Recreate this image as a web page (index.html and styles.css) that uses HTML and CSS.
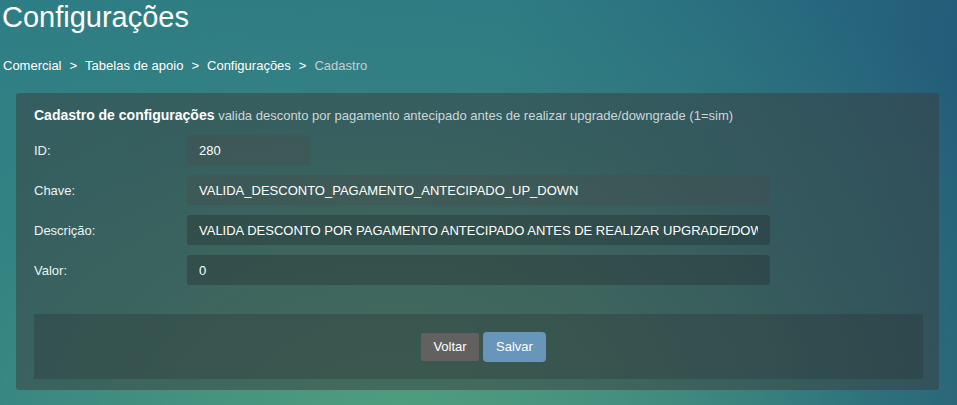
FILE: index.html
```html
<!DOCTYPE html>
<html lang="pt-BR">
<head>
<meta charset="utf-8">
<title>Configurações</title>
<link rel="stylesheet" href="styles.css">
</head>
<body>
<div class="page">
  <h1 class="title">Configurações</h1>
  <nav class="breadcrumb">
    <a class="crumb" href="#">Comercial</a><span class="sep">&gt;</span><a class="crumb" href="#">Tabelas de apoio</a><span class="sep">&gt;</span><a class="crumb" href="#">Configurações</a><span class="sep">&gt;</span><span class="crumb current">Cadastro</span>
  </nav>
  <section class="card">
    <div class="card-head"><strong class="card-title">Cadastro de configurações</strong> <span class="card-sub">valida desconto por pagamento antecipado antes de realizar upgrade/downgrade (1=sim)</span></div>
    <form class="form">
      <div class="row">
        <label class="label" for="f-id">ID:</label>
        <input class="input input-short input-ro" id="f-id" type="text" value="280" readonly>
      </div>
      <div class="row">
        <label class="label" for="f-chave">Chave:</label>
        <input class="input input-ro" id="f-chave" type="text" value="VALIDA_DESCONTO_PAGAMENTO_ANTECIPADO_UP_DOWN" readonly>
      </div>
      <div class="row">
        <label class="label" for="f-desc">Descrição:</label>
        <input class="input" id="f-desc" type="text" value="VALIDA DESCONTO POR PAGAMENTO ANTECIPADO ANTES DE REALIZAR UPGRADE/DOWNGRADE">
      </div>
      <div class="row">
        <label class="label" for="f-valor">Valor:</label>
        <input class="input" id="f-valor" type="text" value="0">
      </div>
      <div class="actions">
        <button class="btn btn-back" type="button">Voltar</button>
        <button class="btn btn-save" type="button">Salvar</button>
      </div>
    </form>
  </section>
</div>
</body>
</html>
```

FILE: styles.css
```css
* { box-sizing: border-box; }
html, body { height: 100%; }
body {
  margin: 0;
  font-family: "Liberation Sans", Arial, sans-serif;
  font-size: 13px;
  color: #ffffff;
  background:
    radial-gradient(ellipse 80% 125% at 42% 104%, rgba(80,158,126,1) 0%, rgba(74,150,126,0.8) 30%, rgba(60,140,128,0.4) 62%, rgba(60,140,128,0) 100%),
    linear-gradient(100deg, #2d7d85 0%, #2c7884 50%, #27687e 78%, #225877 100%);
  overflow: hidden;
}
.page {
  padding: 0 2px;
}
.title {
  margin: 0;
  font-size: 29px;
  line-height: 34px;
  font-weight: normal;
  color: #ffffff;
}
.breadcrumb {
  margin-top: 23px;
  padding-left: 1px;
  line-height: 18px;
  font-size: 13px;
}
.crumb { color: #ffffff; text-decoration: none; }
.crumb.current { color: #c4d0d0; }
.sep { padding: 0 8px; color: #ffffff; }
.card {
  margin: 18px 16px 0 14px;
  padding: 12px 16px 11px 18px;
  background: rgba(58, 60, 60, 0.5);
  border-radius: 3px;
}
.card-head {
  line-height: 20px;
}
.card-title { font-size: 14px; font-weight: bold; color: #ffffff; }
.card-sub { font-size: 13px; color: #cdd6d6; }
.form { margin-top: 9px; }
.row {
  display: flex;
  align-items: center;
  height: 30px;
  margin-bottom: 10px;
}
.label {
  width: 153px;
  flex: none;
  color: #eef2f2;
  font-size: 13px;
}
.input {
  width: 583px;
  height: 30px;
  padding: 0 12px;
  border: 0;
  border-radius: 3px;
  background: rgba(30, 36, 36, 0.32);
  color: #ffffff;
  font-family: "Liberation Sans", Arial, sans-serif;
  font-size: 13px;
  outline: none;
}
.input-ro { background: rgba(72, 76, 76, 0.32); }
.input-short { width: 123px; }
.actions {
  margin-top: 29px;
  height: 65px;
  display: flex;
  align-items: center;
  justify-content: center;
  gap: 4px;
  padding-left: 10px;
  background: rgba(40, 46, 46, 0.3);
}
.btn {
  font-family: "Liberation Sans", Arial, sans-serif;
  font-size: 13px;
  color: #ffffff;
  border: 0;
  cursor: pointer;
}
.btn-back {
  height: 28px;
  width: 58px;
  background: #636060;
  border-radius: 2px;
}
.btn-save {
  height: 30px;
  width: 63px;
  background: #6895ba;
  border-radius: 4px;
}
```
